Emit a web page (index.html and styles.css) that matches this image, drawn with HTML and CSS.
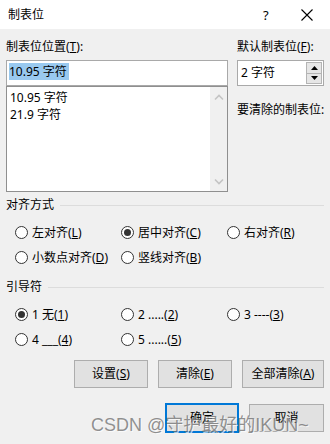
FILE: index.html
```html
<!DOCTYPE html>
<html lang="zh-CN">
<head>
<meta charset="utf-8">
<title>制表位</title>
<link rel="stylesheet" href="styles.css">
</head>
<body>
<div class="dlg">
  <header class="titlebar">
    <span class="title">制表位</span>
    <span class="help">?</span>
    <span class="close"><svg width="12" height="12" viewBox="0 0 12 12"><path d="M0.5 0.5L11.5 11.5M11.5 0.5L0.5 11.5" stroke="#000" stroke-width="1.1" fill="none"/></svg></span>
  </header>
  <main class="content">
    <section class="top">
      <div class="col">
        <div class="lbl">制表位位置(<u>T</u>):</div>
        <div class="input"><span class="sel">10.95 字符</span></div>
        <div class="list">
          <div class="items">
            <div class="item">10.95 字符</div>
            <div class="item">21.9 字符</div>
          </div>
          <div class="vscroll">
            <svg width="10" height="7" viewBox="0 0 10 7"><path d="M1 5.5L5 1.5L9 5.5" stroke="#c4c4c4" stroke-width="1.6" fill="none"/></svg>
            <svg width="10" height="7" viewBox="0 0 10 7"><path d="M1 1.5L5 5.5L9 1.5" stroke="#c4c4c4" stroke-width="1.6" fill="none"/></svg>
          </div>
        </div>
      </div>
      <div class="col">
        <div class="lbl">默认制表位(<u>F</u>):</div>
        <div class="spin">
          <span class="val">2 字符</span>
          <div class="spinbtns">
            <span class="sb"><svg width="7" height="4" viewBox="0 0 7 4"><path d="M0 4L3.5 0L7 4Z" fill="#000"/></svg></span>
            <span class="sb"><svg width="7" height="4" viewBox="0 0 7 4"><path d="M0 0L3.5 4L7 0Z" fill="#000"/></svg></span>
          </div>
        </div>
        <div class="lbl clear-lbl">要清除的制表位:</div>
      </div>
    </section>

    <section class="group">
      <div class="group-head"><span>对齐方式</span><span class="rule"></span></div>
      <div class="radios">
        <label class="radio"><span class="dot"></span><span class="rt">左对齐(<u>L</u>)</span></label>
        <label class="radio"><span class="dot on"></span><span class="rt">居中对齐(<u>C</u>)</span></label>
        <label class="radio"><span class="dot"></span><span class="rt">右对齐(<u>R</u>)</span></label>
        <label class="radio"><span class="dot"></span><span class="rt">小数点对齐(<u>D</u>)</span></label>
        <label class="radio"><span class="dot"></span><span class="rt">竖线对齐(<u>B</u>)</span></label>
      </div>
    </section>

    <section class="group group2">
      <div class="group-head"><span>引导符</span><span class="rule"></span></div>
      <div class="radios">
        <label class="radio"><span class="dot on"></span><span class="rt">1 无(<u>1</u>)</span></label>
        <label class="radio"><span class="dot"></span><span class="rt">2 .....(<u>2</u>)</span></label>
        <label class="radio"><span class="dot"></span><span class="rt">3 ----(<u>3</u>)</span></label>
        <label class="radio"><span class="dot"></span><span class="rt">4 ___(<u>4</u>)</span></label>
        <label class="radio"><span class="dot"></span><span class="rt">5 ......(<u>5</u>)</span></label>
      </div>
    </section>

    <div class="btnrow row1">
      <button class="btn w74">设置(<u>S</u>)</button>
      <button class="btn w74">清除(<u>E</u>)</button>
      <button class="btn w82">全部清除(<u>A</u>)</button>
    </div>
    <div class="btnrow row2">
      <button class="btn w74 default">确定</button>
      <button class="btn w75">取消</button>
    </div>
  </main>
  <div class="watermark">CSDN @守护最好的IKUN~</div>
</div>
</body>
</html>
```

FILE: styles.css
```css
* { box-sizing: border-box; }
html, body { margin: 0; padding: 0; }
body {
  width: 330px;
  height: 444px;
  overflow: hidden;
  background: #f0f0f0;
  font-family: "Noto Sans", "Noto Sans CJK SC", sans-serif;
  font-size: 12px;
  color: #000;
}
u { text-decoration: underline; text-underline-offset: 1px; }

.dlg { position: relative; width: 330px; height: 444px; background: #f0f0f0; }

.titlebar {
  height: 29px;
  background: #fff;
  display: flex;
  align-items: center;
  padding-left: 8px;
}
.title { flex: 1; line-height: 16px; }
.help { width: 38px; font-size: 13px; line-height: 16px; }
.close { width: 29px; display: flex; align-items: center; }

.content { padding: 10px 6px 0 6px; }

.top {
  display: grid;
  grid-template-columns: 222px 87px;
  column-gap: 9px;
}
.lbl { line-height: 16px; margin-bottom: 5px; white-space: nowrap; }
.clear-lbl { margin-top: 16px; }

.input {
  height: 26px;
  border: 1px solid #a9a9a9;
  background: #fff;
  padding: 2px;
}
.sel {
  display: inline-block;
  height: 17px;
  line-height: 17px;
  background: #99c9ef;
  padding-right: 2px;
}

.list {
  height: 106px;
  border: 1px solid #8f8f8f;
  background: #fff;
  display: flex;
}
.items { flex: 1; padding: 2px 3px; }
.item { line-height: 17px; }
.vscroll {
  width: 17px;
  background: #f0f0f0;
  display: flex;
  flex-direction: column;
  justify-content: space-between;
  align-items: center;
  padding: 7px 0 6px;
}

.spin {
  height: 26px;
  border: 1px solid #a9a9a9;
  background: #fff;
  display: flex;
  align-items: stretch;
  padding: 1px 1px 1px 3px;
}
.val { flex: 1; line-height: 22px; }
.spinbtns { width: 16px; display: flex; flex-direction: column; }
.sb {
  flex: 1;
  background: #e6e6e6;
  border: 1px solid #b4b4b4;
  display: flex;
  align-items: center;
  justify-content: center;
}
.sb + .sb { border-top: none; }

.group { margin-top: 5px; }
.group2 { margin-top: 9px; }
.group-head { display: flex; align-items: center; line-height: 16px; }
.rule { flex: 1; height: 1px; background: #dcdcdc; margin-left: 6px; }
.radios {
  margin-top: 7px;
  padding-left: 9px;
  display: grid;
  grid-template-columns: 106px 106px 1fr;
  grid-auto-rows: 25px;
}
.radio { display: flex; align-items: center; gap: 4px; white-space: nowrap; }
.rt { line-height: 16px; }
.dot {
  flex: none;
  width: 13px;
  height: 13px;
  border: 1px solid #333;
  border-radius: 50%;
  background: #fff;
  display: flex;
  align-items: center;
  justify-content: center;
}
.dot.on::after {
  content: "";
  width: 7px;
  height: 7px;
  border-radius: 50%;
  background: #333;
}

.btnrow { display: flex; justify-content: flex-end; align-items: center; gap: 10px; }
.row1 { margin-top: 8px; }
.row2 { margin-top: 15px; height: 30px; }
.btn {
  height: 28px;
  background: #e1e1e1;
  border: 1px solid #adadad;
  font: inherit;
  color: #000;
  padding: 0;
  line-height: 26px;
}
.w74 { width: 74px; }
.w75 { width: 75px; }
.w82 { width: 82px; }
.btn.default { height: 30px; border: 2px solid #0078d7; }

.watermark {
  position: absolute;
  left: 91px;
  top: 413px;
  font-family: "Liberation Sans", "Noto Sans CJK SC", sans-serif;
  font-size: 18px;
  line-height: 24px;
  color: rgba(110, 110, 110, 0.75);
  text-shadow: 1px 1px 0 rgba(255, 255, 255, 0.7);
  white-space: nowrap;
  pointer-events: none;
}
```
